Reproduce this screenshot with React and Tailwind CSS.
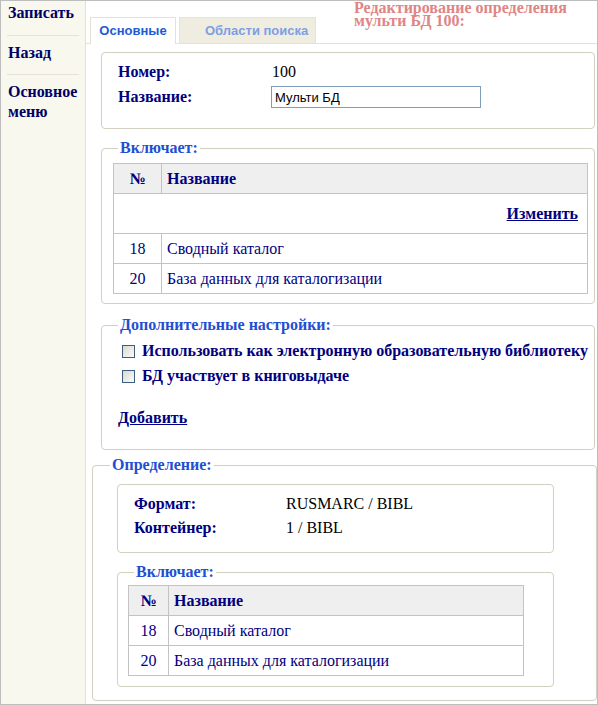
const serif = "font-['Liberation_Serif','Times_New_Roman',serif]";
const sans = "font-['Liberation_Sans',Arial,sans-serif]";

const rows = [
  { num: 18, name: 'Сводный каталог' },
  { num: 20, name: 'База данных для каталогизации' },
];

function Checkbox() {
  return (
    <span className="inline-block w-[13px] h-[13px] shrink-0 border border-[#3d5d7c] bg-gradient-to-br from-[#d9d9d3] to-[#fbfbf8]" />
  );
}

function DbTable({ numWidth, withEdit, className }) {
  return (
    <table className={'border-collapse ' + className}>
      <thead>
        <tr className="bg-[#efefef]">
          <th className="border border-[#c3c3c3] h-[30px] text-center font-bold text-[#000080]" style={{ width: numWidth }}>№</th>
          <th className="border border-[#c3c3c3] h-[30px] text-left pl-[5px] font-bold text-[#000080]">Название</th>
        </tr>
      </thead>
      <tbody>
        {withEdit && (
          <tr>
            <td colSpan={2} className="border border-[#c3c3c3] h-[40px] text-right pr-[9px]">
              <a href="#" className="font-bold text-[#000080] underline">Изменить</a>
            </td>
          </tr>
        )}
        {rows.map((r) => (
          <tr key={r.num}>
            <td className="border border-[#c3c3c3] h-[30px] text-center text-[#000080]">{r.num}</td>
            <td className="border border-[#c3c3c3] h-[30px] pl-[5px] text-[#000080]">{r.name}</td>
          </tr>
        ))}
      </tbody>
    </table>
  );
}

export default function App() {
  return (
    <div className={`w-[598px] h-[705px] border border-[#bdbdbd] flex overflow-hidden bg-white text-[16px] leading-[20px] ${serif}`}>
      {/* меню слева */}
      <div className="w-[85px] shrink-0 bg-[#f8f8ef] border-r border-[#e4e2d2] px-[6px] font-bold text-[#000066]">
        <div className="pt-[2px] h-[35px] border-b border-[#e6e4d6] pl-[1px]">Записать</div>
        <div className="pt-[7px] h-[39px] border-b border-[#e6e4d6] pl-[1px]">Назад</div>
        <div className="pt-[7px] pl-[1px]">Основное меню</div>
      </div>

      <div className="flex-1 min-w-0">
        {/* вкладки */}
        <div className="h-[43px] border-b border-[#e4e2d0] flex items-end pl-[4px]">
          <div className={`relative z-10 -mb-px h-[27px] w-[86px] bg-white border border-b-0 border-[#e4e2d0] flex items-center justify-center text-[13px] font-bold text-[#1d5ad6] ${sans}`}>
            Основные
          </div>
          <div className={`ml-[3px] h-[26px] w-[137px] bg-[#efede0] border border-b-0 border-[#e6e4d4] flex items-center pl-[25px] text-[13px] font-bold text-[#7f9de3] ${sans}`}>
            Области поиска
          </div>
          <div className="self-start ml-[38px] leading-[13px] font-bold text-[#e08585]">
            Редактирование определения<br />мульти БД 100:
          </div>
        </div>

        <div className="pl-[6px]">
          {/* номер и название */}
          <div className="ml-[9px] mr-[2px] mt-[8px] h-[77px] border border-[#d2d1c1] rounded-[4px] pl-[16px] pt-[9px]">
            <div className="flex">
              <span className="w-[154px] font-bold text-[#000080]">Номер:</span>
              <span className="text-black">100</span>
            </div>
            <div className="flex items-baseline mt-[4px]">
              <span className="w-[153px] font-bold text-[#000080]">Название:</span>
              <input
                defaultValue="Мульти БД"
                className={`w-[210px] h-[22px] border border-[#7f9db9] px-[3px] text-[13px] text-black outline-none ${sans}`}
              />
            </div>
          </div>

          {/* включает */}
          <fieldset className="ml-[9px] mr-[2px] mt-[9px] border border-[#d2d1c1] rounded-[4px] pl-[11px] pr-[6px] pb-[9px]">
            <legend className="ml-[5px] px-[2px] font-bold text-[#1f4fd2]">Включает:</legend>
            <DbTable numWidth={48} withEdit className="w-full mt-[5px]" />
          </fieldset>

          {/* доп. настройки */}
          <fieldset className="ml-[9px] mr-[2px] mt-[11px] border border-[#d2d1c1] rounded-[4px] pl-[16px] pb-[21px]">
            <legend className="px-[2px] font-bold text-[#1f4fd2]">Дополнительные настройки:</legend>
            <div className="mt-[6px] flex items-center gap-[7px] pl-[4px] font-bold text-[#000080]">
              <Checkbox />
              <span>Использовать как электронную образовательную библиотеку</span>
            </div>
            <div className="mt-[5px] flex items-center gap-[7px] pl-[4px] font-bold text-[#000080]">
              <Checkbox />
              <span>БД участвует в книговыдаче</span>
            </div>
            <div className="mt-[22px]">
              <a href="#" className="font-bold text-[#000080] underline">Добавить</a>
            </div>
          </fieldset>

          {/* определение */}
          <fieldset className="mt-[5px] border border-[#d2d1c1] rounded-[4px] pl-[17px] pb-[13px]">
            <legend className="px-[2px] font-bold text-[#1f4fd2]">Определение:</legend>
            <div className="ml-[7px] mt-[9px] w-[437px] h-[69px] border border-[#d2d1c1] rounded-[4px] pl-[16px] pt-[9px]">
              <div className="flex">
                <span className="w-[152px] font-bold text-[#000080]">Формат:</span>
                <span className="text-black">RUSMARC / BIBL</span>
              </div>
              <div className="flex mt-[4px]">
                <span className="w-[152px] font-bold text-[#000080]">Контейнер:</span>
                <span className="text-black">1 / BIBL</span>
              </div>
            </div>
            <fieldset className="ml-[7px] mt-[9px] w-[437px] border border-[#d2d1c1] rounded-[4px] pl-[10px] pb-[10px]">
              <legend className="ml-[6px] px-[2px] font-bold text-[#1f4fd2]">Включает:</legend>
              <DbTable numWidth={40} className="w-[396px] mt-[3px]" />
            </fieldset>
          </fieldset>
        </div>
      </div>
    </div>
  );
}
